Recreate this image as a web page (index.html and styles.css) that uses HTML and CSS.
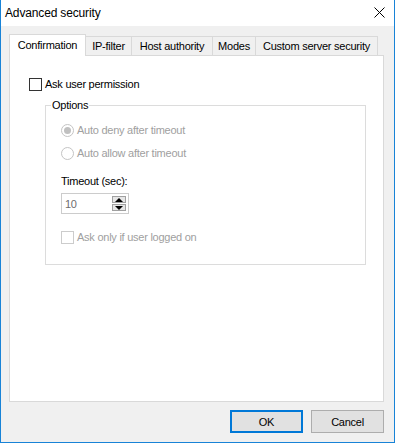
FILE: index.html
```html
<!DOCTYPE html>
<html lang="en">
<head>
    <meta charset="UTF-8">
    <meta name="viewport" content="width=device-width, initial-scale=1.0">
    <title>Advanced security</title>
    <link rel="stylesheet" href="styles.css">
</head>
<body>

<div class="window">
    <div class="titlebar">
        <span class="title">Advanced security</span>
        <span class="close">
            <svg width="11" height="11" viewBox="0 0 11 11">
                <path d="M0.5 0.5 L10.5 10.5 M10.5 0.5 L0.5 10.5" stroke="#000" stroke-width="1" fill="none"/>
            </svg>
        </span>
    </div>

    <div class="client">
        <div class="tabs">
            <div class="tab active w-conf">Confirmation</div>
            <div class="tab w-ip">IP-filter</div>
            <div class="tab w-host">Host authority</div>
            <div class="tab w-modes">Modes</div>
            <div class="tab w-custom">Custom server security</div>
        </div>

        <div class="panel">
            <label class="check">
                <span class="box"></span>
                <span>Ask user permission</span>
            </label>

            <fieldset class="group">
                <legend>Options</legend>

                <div class="radio disabled">
                    <span class="circle checked"></span>
                    <span>Auto deny after timeout</span>
                </div>
                <div class="radio disabled">
                    <span class="circle"></span>
                    <span>Auto allow after timeout</span>
                </div>

                <div class="field-label">Timeout (sec):</div>
                <div class="spin">
                    <span class="spin-value">10</span>
                    <span class="spin-buttons">
                        <span class="spin-btn"><span class="arrow up"></span></span>
                        <span class="spin-btn"><span class="arrow down"></span></span>
                    </span>
                </div>

                <label class="check disabled">
                    <span class="box"></span>
                    <span>Ask only if user logged on</span>
                </label>
            </fieldset>
        </div>

        <div class="buttons">
            <button class="btn default">OK</button>
            <button class="btn">Cancel</button>
        </div>
    </div>
</div>

</body>
</html>
```

FILE: styles.css
```css
body {
    margin: 0;
    font-family: "Liberation Sans", Arial, sans-serif;
    font-size: 11px;
    letter-spacing: -0.25px;
    color: #000;
    background: #fff;
}
.window {
    width: 395px;
    height: 443px;
    box-sizing: border-box;
    border: 1px solid #1883d7;
    border-top: none;
    background: #f0f0f0;
    display: flex;
    flex-direction: column;
}
.titlebar {
    height: 26px;
    background: #fff;
    display: flex;
    align-items: center;
    justify-content: space-between;
    padding: 0 9px 0 4px;
}
.title {
    font-size: 12px;
    letter-spacing: -0.15px;
    padding-bottom: 1px;
}
.close {
    display: flex;
    padding-bottom: 1px;
}
.client {
    padding: 8px 10px 0 8px;
}
.tabs {
    display: flex;
    align-items: flex-end;
    height: 21px;
}
.tab {
    flex-shrink: 0;
    white-space: nowrap;
    text-align: center;
    height: 19px;
    box-sizing: border-box;
    border: 1px solid #d9d9d9;
    border-left: none;
    border-bottom: none;
    line-height: 18px;
    background: #f0f0f0;
}
.tab.active {
    height: 22px;
    margin-bottom: -1px;
    border-left: 1px solid #d9d9d9;
    background: #fff;
    line-height: 20px;
    position: relative;
}
.w-conf { width: 77px; }
.w-ip { width: 46px; }
.w-host { width: 81px; }
.w-modes { width: 43px; }
.w-custom { width: 122px; }
.panel {
    height: 347px;
    box-sizing: border-box;
    border: 1px solid #d9d9d9;
    background: #fff;
    padding: 21px 17px 0 19px;
}
.check, .radio {
    display: flex;
    align-items: center;
    gap: 3px;
    height: 14px;
}
.box {
    width: 13px;
    height: 13px;
    box-sizing: border-box;
    border: 1px solid #333;
    background: #fff;
}
.check.disabled, .radio.disabled {
    color: #a0a0a0;
}
.check.disabled .box {
    border-color: #cccccc;
}
.group {
    margin: 8px 0 0 16px;
    padding: 11px 15px 19px 15px;
    border: 1px solid #dcdcdc;
    height: 166px;
    box-sizing: border-box;
}
.group legend {
    padding: 0 1px;
    margin-left: -10px;
    line-height: 13px;
}
.radio {
    margin-bottom: 9px;
}
.circle {
    width: 13px;
    height: 13px;
    box-sizing: border-box;
    border: 1px solid #c4c4c4;
    border-radius: 50%;
    background: #fff;
    display: flex;
    align-items: center;
    justify-content: center;
}
.circle.checked::after {
    content: "";
    width: 7px;
    height: 7px;
    border-radius: 50%;
    background: #c0c0c0;
}
.field-label {
    margin-top: 14px;
    line-height: 14px;
}
.spin {
    margin-top: 5px;
    width: 68px;
    height: 21px;
    box-sizing: border-box;
    border: 1px solid #cccccc;
    display: flex;
    align-items: center;
    justify-content: space-between;
    padding: 0 2px 0 3px;
    color: #6d6d6d;
}
.spin-buttons {
    display: flex;
    flex-direction: column;
    gap: 1px;
}
.spin-btn {
    width: 14px;
    height: 7px;
    box-sizing: border-box;
    border: 1px solid #a0a0a0;
    background: #e6e6e6;
    display: flex;
    align-items: center;
    justify-content: center;
}
.arrow {
    width: 0;
    height: 0;
    border-left: 4px solid transparent;
    border-right: 4px solid transparent;
}
.arrow.up {
    border-bottom: 4px solid #000;
}
.arrow.down {
    border-top: 4px solid #000;
}
.group .check {
    margin-top: 16px;
}
.buttons {
    display: flex;
    justify-content: flex-end;
    gap: 8px;
    margin-top: 8px;
    padding-right: 0;
}
.btn {
    width: 73px;
    height: 23px;
    box-sizing: border-box;
    border: 1px solid #adadad;
    background: #e1e1e1;
    font-family: inherit;
    font-size: 11px;
    letter-spacing: -0.25px;
    color: #000;
    padding: 0;
}
.btn.default {
    border: 2px solid #0078d7;
}
```
